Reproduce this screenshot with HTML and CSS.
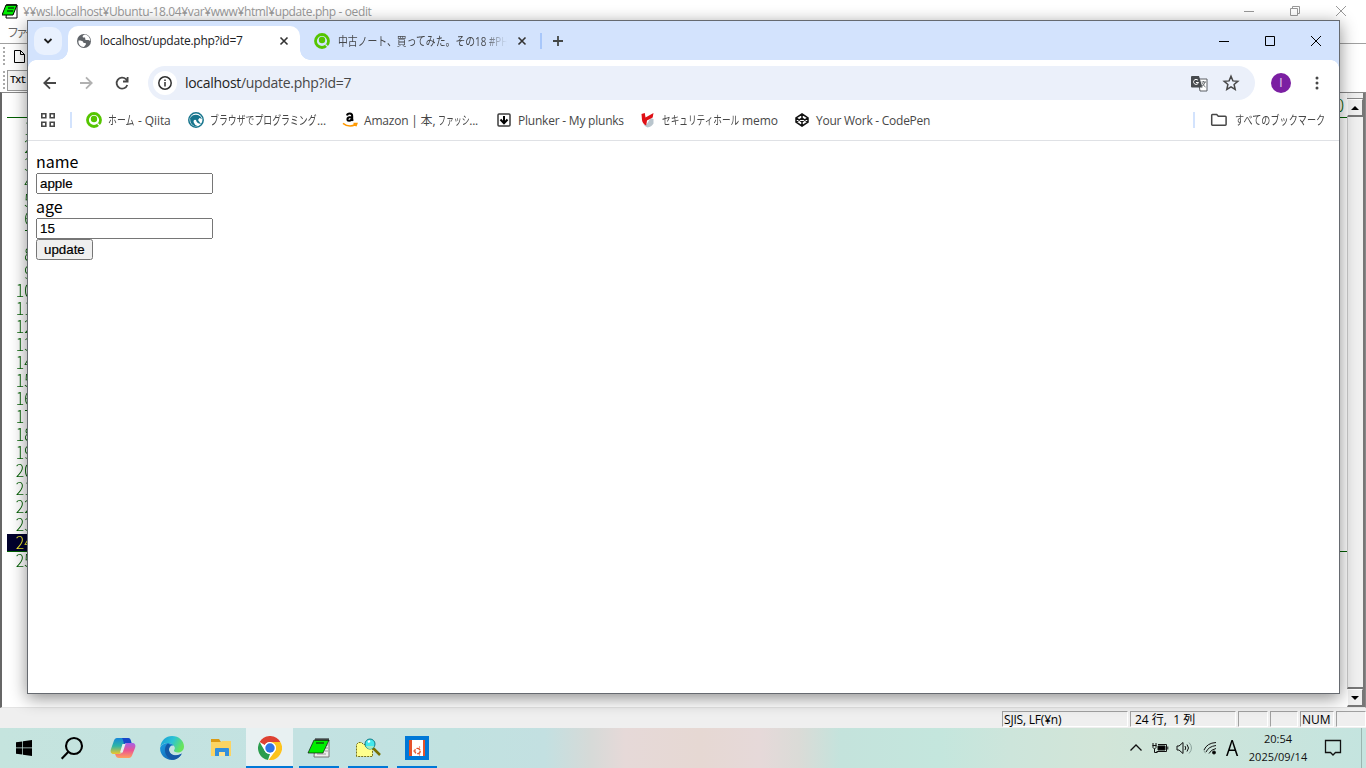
FILE: index.html
```
<!DOCTYPE html>
<html lang="ja">
	<head>
		<meta charset="utf-8"/>
		<title>localhost/update.php?id=7</title>
		<link rel="stylesheet" href="styles.css">
	</head>
	<body>
		<div class="editor">
			<div class="editor-title">
				<svg width="16" height="16" viewBox="0 0 16 16"><path d="M5 2h10v13H4z" fill="#fff" stroke="#000"/><path d="M4 2h11l-4 10H0z" fill="#0e0" stroke="#000"/><path d="M5 1v2M7 1v2M9 1v2M11 1v2M13 1v2M6 5h6M5 8h6" stroke="#000"/></svg>
				<span class="editor-name">¥¥wsl.localhost¥Ubuntu-18.04¥var¥www¥html¥update.php - oedit</span>
				<div class="editor-controls">
					<svg width="12" height="12" viewBox="0 0 12 12"><path d="M1 6.500h10"/></svg>
					<svg width="12" height="12" viewBox="0 0 12 12"><path d="M1.500 3.500h7v7h-7zM3.500 3V1.500h7v7H9"/></svg>
					<svg width="12" height="12" viewBox="0 0 12 12"><path d="M1 1l10 10M11 1L1 11"/></svg>
				</div>
			</div>
			<div class="editor-menu">ファイル(F)</div>
			<div class="editor-bar">
				<i class="grip"></i>
				<svg width="13" height="15" viewBox="0 0 13 15"><path d="M1.500 1.500h6l4 4v8h-10zM7.500 1.500v4h4" fill="#fff" stroke="#000"/></svg>
			</div>
			<div class="editor-bar">
				<i class="grip"></i>
				<span class="txt-button">Txt</span>
			</div>
			<div class="editor-main">
				<div class="code">
					<div class="ruler"><span>0</span></div>
					<div class="line"><span>&nbsp;1</span></div>
					<div class="line"><span>&nbsp;2</span></div>
					<div class="line"><span>&nbsp;3</span></div>
					<div class="line"><span>&nbsp;4</span></div>
					<div class="line"><span>&nbsp;5</span></div>
					<div class="line"><span>&nbsp;6</span></div>
					<div class="line"><span>&nbsp;7</span></div>
					<div class="line"><span>&nbsp;8</span></div>
					<div class="line"><span>&nbsp;9</span></div>
					<div class="line"><span>10</span></div>
					<div class="line"><span>11</span></div>
					<div class="line"><span>12</span></div>
					<div class="line"><span>13</span></div>
					<div class="line"><span>14</span></div>
					<div class="line"><span>15</span></div>
					<div class="line"><span>16</span></div>
					<div class="line"><span>17</span></div>
					<div class="line"><span>18</span></div>
					<div class="line"><span>19</span></div>
					<div class="line"><span>20</span></div>
					<div class="line"><span>21</span></div>
					<div class="line"><span>22</span></div>
					<div class="line"><span>23</span></div>
					<div class="line current"><span>24</span></div>
					<div class="line"><span>25</span></div>
				</div>
				<div class="scrollbar">
					<i class="splitter"></i>
					<i class="arrow up"></i>
					<i class="track"></i>
					<i class="arrow down"></i>
				</div>
			</div>
			<div class="editor-status">
				<span class="cell encoding">SJIS, LF(¥n)</span>
				<span class="cell position">24 行,&nbsp; 1 列</span>
				<span class="cell small"></span>
				<span class="cell small"></span>
				<span class="cell num">NUM</span>
				<span class="cell last"></span>
			</div>
		</div>

		<div class="taskbar">
			<div class="apps">
				<div class="app start"><svg width="16" height="16" viewBox="0 0 16 16"><path d="M0 2.300l6.300-.9v6.100H0zM7 1.300L16 0v7.500H7zM0 8.300h6.300v6.200L0 13.700zM7 8.300h9V16l-9-1.300z"/></svg></div>
				<div class="app search"><svg width="24" height="24" viewBox="0 0 24 24" fill="none" stroke="#000" stroke-width="2.100"><circle cx="14" cy="10" r="8"/><path d="M8.400 15.800L1.700 22.700"/></svg></div>
				<div class="app"><svg width="26" height="24" viewBox="0 0 26 24">
					<defs>
						<linearGradient id="cpa" x1="0" y1="0" x2="0" y2="1"><stop offset="0" stop-color="#1686d9"/><stop offset=".5" stop-color="#2db5a5"/><stop offset="1" stop-color="#f1c52c"/></linearGradient>
						<linearGradient id="cpb" x1="0" y1="0" x2="0" y2="1"><stop offset="0" stop-color="#a561e8"/><stop offset=".5" stop-color="#eb5592"/><stop offset="1" stop-color="#ffa15e"/></linearGradient>
					</defs>
					<path d="M7 2h10c2 0 3 1 3.500 3L21 7h-4c-2 0-3 1-3.500 3l-2 6c-.5 1-1 2-3 2H4c-3 0-4-2-3-5L4 4.500C4.600 3 5.500 2 7 2z" fill="url(#cpa)"/>
					<path d="M13 2h5c2 0 2.500 1 3 3l.6 2H17c-2 0-2.500.5-3 2-.3-3-.7-5-2-7z" fill="#1747c9"/>
					<path d="M19 22H9c-2 0-3-1-3.500-3L5 18h4c2 0 3-1 3.500-3l2-6c.5-1.500 1.500-2 3-2H22c3 0 4 2 3 5l-3 7.500c-.6 1.500-1.500 2.500-3 2.500z" fill="url(#cpb)"/>
					<path d="M12.500 8h3l-2.800 8.500H10z" fill="#e3f2ef"/>
				</svg></div>
				<div class="app"><svg width="24" height="24" viewBox="0 0 24 24">
					<defs>
						<linearGradient id="eda" x1="0" y1="0" x2="1" y2=".4"><stop offset="0" stop-color="#169bd7"/><stop offset=".55" stop-color="#2cc3d4"/><stop offset="1" stop-color="#67e45c"/></linearGradient>
						<linearGradient id="edb" x1="0" y1="0" x2="1" y2="1"><stop offset="0" stop-color="#1b9de2"/><stop offset="1" stop-color="#1256a5"/></linearGradient>
					</defs>
					<path d="M.3 11C1 4.500 6 0 12 0c7 0 12 5 12 10.500 0 3.500-2.500 6-6 6-3 0-4.500-1.300-4-2.300 1-1.200 1-2 .6-3.200C13.500 8.500 11 7 8 7c-4 0-6.700 2-7.700 4z" fill="url(#eda)"/>
					<path d="M.2 11.500C1.500 8.500 4.500 7 8 7c2.500 0 4.700 1 5.900 2.600-2.600-.9-5 1.200-4.900 4.400.1 4 4.500 6.500 9 5.200 1.600-.4 2.700-1 3.800-1.600C19.700 21.500 16 24 12 24 5 24-.6 18 .2 11.500z" fill="url(#edb)"/>
					<path d="M8 7.500c-3.500 2.500-4 8-1.500 12 1.500 2.400 4 3.900 7 4.300 3.500-.5 6.800-2.900 8.300-6.200-5.300 3.300-12 1.500-12.800-3.600-.3-2 .6-3.800 2-4.500z" fill="#1459a6"/>
				</svg></div>
				<div class="app"><svg width="22" height="20" viewBox="0 0 22 20"><path d="M1 1h8l2 3H1z" fill="#dc9a13"/><path d="M1 4h10l1-1h9v15H1z" fill="#fcd462"/><path d="M5 18v-7q0-1 1-1h12q1 0 1 1v7h-4v-4H9v4z" fill="#338fdc"/><path d="M9 14h6v4H9z" fill="#fbe191"/></svg></div>
				<div class="app active"><svg width="24" height="24" viewBox="0 0 24 24"><circle cx="12" cy="12" r="12" fill="#fff"/><path d="M1.600 6A12 12 0 0 1 22.400 6H12a6 6 0 0 0-5.200 3z" fill="#dd4233"/><path d="M1.600 6l5.200 9A6 6 0 0 0 12 18l-2 5.900A12 12 0 0 1 1.600 6z" fill="#2b9d4e"/><path d="M22.400 6A12 12 0 0 1 10.500 23.900L17.200 15A6 6 0 0 0 17 8.700L12 6z" fill="#fcc31e"/><circle cx="12" cy="12" r="6" fill="#fff"/><circle cx="12" cy="12" r="4.700" fill="#2e74e6"/></svg></div>
				<div class="app open"><svg width="24" height="22" viewBox="0 0 24 22"><path d="M8 3h14v17H7z" fill="#eee" stroke="#777"/><path d="M10 17h9M18 8h3M18 11h3M18 14h3" stroke="#999"/><path d="M7 3h15l-6 13H1z" fill="#0e0" stroke="#111" stroke-width=".7"/><path d="M9 1v3M11 1v3M13 1v3M15 1v3M17 1v3M19 1v3M21 1v3M9 6h8" stroke="#111"/></svg></div>
				<div class="app open"><svg width="26" height="20" viewBox="0 0 26 20"><path d="M1.500 18.500v-12l2-2h3l2 2h9v12z" fill="#ffff8c"/><path d="M1.500 18.500v-12l2-2h3l2 2h9v12z" fill="none" stroke="#77701b" stroke-dasharray="2 1"/><path d="M18 10l7 7" stroke="#777000" stroke-width="2.500"/><circle cx="15" cy="6" r="5" fill="#42e8ec" stroke="#117d88"/><path d="M11 8h8q-1 3-4 3t-4-3z" fill="#a2eac5"/><path d="M13 4l2-1" stroke="#fff" stroke-width="2"/></svg></div>
				<div class="app open"><svg width="24" height="24" viewBox="0 0 24 24"><path d="M0 0h24v24H0z" fill="#0078d7"/><path d="M4 4h16v16H4z" fill="#fff"/><path d="M4 4h3v16H4zM18 4h2v16h-2z" fill="#e5522b"/><circle cx="12.500" cy="15" r="2.700" fill="none" stroke="#e5522b" stroke-width="1.300" stroke-dasharray="4.500 1.150"/><path d="M8.500 15h1M14.300 11.500l.5-.8M14.300 18.500l.5.800" stroke="#e5522b" stroke-width="1.300"/></svg></div>
			</div>
			<div class="tray">
				<svg width="14" height="14" viewBox="0 0 14 14"><path d="M1.500 9.500L7 4l5.500 5.500" stroke-width="1.300"/></svg>
				<svg class="battery" width="17" height="12" viewBox="0 0 17 12"><path d="M1 1v3M4 1v3M.5 3.500h4M1 4v1.500l1.500 1.500L4 5.500V4M2.500 7v3.500h3M6 2.500h8.500v7H4.500M15.800 4.500v3"/><path d="M6 4h7v4H6z" fill="#000"/></svg>
				<svg class="volume" width="17" height="14" viewBox="0 0 17 14"><path d="M1 5h2l4-3.500v11L3 9H1zM9 5q1.500 2 0 4M11 3.500q3 3.500 0 7"/><path d="M13 1.500q5 5.500 0 11" stroke="#8ba29c"/></svg>
				<svg class="wifi" width="14" height="14" viewBox="0 0 14 14"><path d="M1 9Q4 2 13 1.500M3 11Q5.500 5.500 13 4.500M6 12.500Q8 8.500 13 7.500"/><circle cx="11" cy="11.500" r="1.500" fill="#000"/><path d="M1 9q0 3 2 3" stroke="#93a8a1"/></svg>
				<span class="ime">A</span>
				<div class="clock"><span>20:54</span><span>2025/09/14</span></div>
				<svg class="notice" width="18" height="18" viewBox="0 0 18 18"><path d="M1.500 1.500h15v12h-5L9 16l-2.500-2.500h-5z" stroke-width="1.300"/></svg>
				<i class="show-desktop"></i>
			</div>
		</div>

		<div class="browser">
			<div class="tabstrip">
				<div class="tab-search"><svg width="10" height="10" viewBox="0 0 10 10"><path d="M1.500 3L5 6.500 8.500 3"/></svg></div>
				<div class="tab selected">
					<svg class="favicon" width="16" height="16" viewBox="0 0 16 16"><circle cx="8" cy="8" r="7" fill="#5f6368"/><path d="M2.500 7.500C5 7.500 7.500 8 7.500 10H9.500q1 1 0 2T8 14C4 14 2 11 2.500 7.500zM9 1.600C7 2 6 3.500 7 4.500h2l.5 2.500h3L14.300 8C14 4.500 12 2 9 1.600z" fill="#fff"/></svg>
					<span class="tab-title local">localhost/update.php?id=7</span>
					<svg class="close" width="10" height="10" viewBox="0 0 10 10"><path d="M1.500 1.500l7 7M8.500 1.500l-7 7"/></svg>
				</div>
				<div class="tab">
					<svg class="favicon" width="16" height="16" viewBox="0 0 16 16"><circle cx="8" cy="8" r="6.500" fill="none" stroke="#55c500" stroke-width="2.800"/><circle cx="8" cy="7" r="3.200" fill="#55c500"/><path d="M11.500 11.500L15 15" stroke="#d3e3fd" stroke-width="1.300"/></svg>
					<span class="tab-title qiita"><b>中古ノート、買ってみた。その18 #PH</b></span>
					<svg class="close" width="10" height="10" viewBox="0 0 10 10"><path d="M1.500 1.500l7 7M8.500 1.500l-7 7"/></svg>
				</div>
				<i class="tab-divider"></i>
				<svg class="new-tab" width="12" height="12" viewBox="0 0 12 12"><path d="M6 1v10M1 6h10"/></svg>
				<div class="window-controls">
					<svg width="12" height="12" viewBox="0 0 12 12"><path d="M1 6.500h10"/></svg>
					<svg width="12" height="12" viewBox="0 0 12 12"><path d="M1.500 1.500h9v9h-9z"/></svg>
					<svg width="12" height="12" viewBox="0 0 12 12"><path d="M1 1l10 10M11 1L1 11"/></svg>
				</div>
			</div>
			<div class="toolbar">
				<svg class="nav" width="16" height="16" viewBox="0 0 16 16"><path d="M14 8H2.500M8 2.300L2.300 8 8 13.700"/></svg>
				<svg class="nav off" width="16" height="16" viewBox="0 0 16 16"><path d="M2 8h11.500M8 2.300L13.700 8 8 13.700"/></svg>
				<svg class="nav" width="16" height="16" viewBox="0 0 16 16"><path d="M13.300 10A5.500 5.500 0 1 1 12 4.200L13.500 6M13.600 2v4.500H9"/></svg>
				<div class="omnibox">
					<div class="info"><svg width="16" height="16" viewBox="0 0 16 16"><circle cx="8" cy="8" r="6.200"/><path d="M8 7v4.500M8 4.500V6"/></svg></div>
					<span class="url"><b>localhost</b>/update.php?id=7</span>
					<svg class="translate" width="17" height="17" viewBox="0 0 17 17"><path d="M7 4h9v12H9z" fill="#fff" stroke="#5a5f64"/><path d="M1 1h7l3.500 11.500H1q-1 0-1-1V2q0-1 1-1z" fill="#474b4f"/><path d="M10.500 7H15M12.500 6v1M14 7q-.5 3-4 5M11.500 8q1 3 3 4" fill="none" stroke="#6a6e71"/><path d="M7 5.300A2.500 2.500 0 1 0 7.500 7.500H5" fill="none" stroke="#fff"/></svg>
					<svg class="star" width="18" height="18" viewBox="0 0 18 18"><path d="M9 2.300l1.900 4.600 4.900.4-3.700 3.200 1.100 4.900L9 12.800l-4.200 2.600 1.100-4.900-3.700-3.200 4.900-.4z"/></svg>
				</div>
				<div class="avatar">I</div>
				<svg class="more" width="4" height="16" viewBox="0 0 4 16"><circle cx="2" cy="3" r="1.500"/><circle cx="2" cy="8" r="1.500"/><circle cx="2" cy="13" r="1.500"/></svg>
			</div>
			<div class="bookmarks">
				<svg class="grid" width="16" height="16" viewBox="0 0 16 16"><path d="M1.800 1.800h4v4h-4zM10.200 1.800h4v4h-4zM1.800 10.200h4v4h-4zM10.200 10.200h4v4h-4z"/></svg>
				<i class="divider"></i>
				<div class="bookmark b1">
					<svg width="16" height="16" viewBox="0 0 16 16"><circle cx="8" cy="8" r="6.500" fill="none" stroke="#55c500" stroke-width="2.800"/><circle cx="8" cy="7" r="3.200" fill="#55c500"/><path d="M11.500 11.500L15 15" stroke="#fff" stroke-width="1.300"/></svg>
					<span><b class="kana">ホーム</b> - Qiita</span>
				</div>
				<div class="bookmark b2">
					<svg width="16" height="16" viewBox="0 0 16 16"><circle cx="8" cy="8" r="7.200" fill="#fff" stroke="#17758d" stroke-width="1.500"/><path d="M2 6q3-4.500 8-3 3 1 4 4l-2.500-1-1.500 2 3 4q-4.500-.5-5-4Q5.500 7 5.500 10q1 3 4 4-5 1-7-4z" fill="#17758d"/></svg>
					<span><b class="kana">ブラウザでプログラミング</b>...</span>
				</div>
				<div class="bookmark b3">
					<svg width="16" height="16" viewBox="0 0 16 16"><path d="M5 3.500Q5.300 1.500 7.800 1.500q2.400 0 2.400 2.500v3.500l.8 1.200M9.500 5Q5.400 5 5.400 7.200q0 1.500 1.700 1.500 2.400 0 2.400-2.200" fill="none" stroke="#000" stroke-width="2"/><path d="M1 11.300q6 4.700 12.500 1.200M11.500 11.500h3.300l-1 2.800" fill="none" stroke="#f90" stroke-width="1.600"/></svg>
					<span>Amazon | 本, <b class="kana">ファッシ</b>...</span>
				</div>
				<div class="bookmark b4">
					<svg width="16" height="16" viewBox="0 0 16 16"><rect x="2" y="2" width="12" height="12" rx="1" fill="#fff" stroke="#3c3c3c" stroke-width="1.500"/><path d="M8 4v7M4.500 7.500L8 11.300l3.500-3.800" fill="none" stroke="#000" stroke-width="2"/></svg>
					<span>Plunker - My plunks</span>
				</div>
				<div class="bookmark b5">
					<svg width="16" height="16" viewBox="0 0 16 16"><path d="M10.500 6l3 1v4.500q-2 3.500-6 4-3-1-4-3.500l3 .5z" fill="#b9c5cd"/><path d="M1.500 2L4.800 1l.7 4.500L13.500 1l-.8 4.500L7 8.500l-.8 5Q2.500 11.500 2 8z" fill="#df1016"/></svg>
					<span><b class="kana">セキュリティホール</b> memo</span>
				</div>
				<div class="bookmark b6">
					<svg width="16" height="16" viewBox="0 0 16 16" fill="none" stroke="#111" stroke-width="1.500"><path d="M8 2l6 3.800v4.400L8 14l-6-3.800V5.800zM8 2v4M8 10v4M2 5.800l6 4 6-4M2 10.200l6-4 6 4"/></svg>
					<span>Your Work - CodePen</span>
				</div>
				<div class="all-bookmarks">
					<i class="divider"></i>
					<svg width="18" height="16" viewBox="0 0 18 16"><path d="M1.700 12.500V3.200q0-.7.700-.7h4.300l1.600 1.700h7q.8 0 .8.800v7.500q0 .7-.8.700H2.400q-.7 0-.7-.7z"/></svg>
					<span class="all-label">すべてのブックマーク</span>
				</div>
			</div>
			<div class="page">
				<form>
					name<br>
					<input type="text" name="name" value="apple">
					age<br>
					<input type="text" name="age" value="15">
					<button type="button">update</button>
				</form>
			</div>
		</div>
	</body>
</html>
```

FILE: styles.css
```
* {
	box-sizing: border-box;
}
html, body {
	height: 100%;
}
body {
	margin: 0;
	overflow: hidden;
	position: relative;
	font-family: "Open Sans", "Noto Sans CJK JP", sans-serif;
	font-size: 12px;
	display: flex;
	flex-direction: column;
}
svg {
	display: block;
	flex: none;
}
i {
	display: block;
	flex: none;
}
b {
	font-weight: normal;
}
span {
	white-space: nowrap;
}

/* editor behind the browser */
.editor {
	height: 728px;
	display: flex;
	flex-direction: column;
	background: #fff;
}
.editor-title {
	height: 22px;
	display: flex;
	align-items: center;
	padding-left: 2px;
	color: #999;
}
.editor-name {
	margin-left: 5px;
	letter-spacing: -0.38px;
}
.editor-controls {
	display: flex;
	gap: 34px;
	margin-left: auto;
	padding-right: 19px;
	fill: none;
	stroke: #999;
}
.editor-menu {
	height: 22px;
	padding-left: 7px;
	line-height: 21px;
	color: #666;
	border-bottom: 1px solid #a0a0a0;
	letter-spacing: -3px;
}
.editor-bar {
	height: 24px;
	display: flex;
	align-items: center;
	padding-left: 3px;
	gap: 2px;
}
.editor-bar svg {
	margin-left: 6px;
}
.grip {
	width: 2px;
	height: 18px;
	background: repeating-linear-gradient(#aaa 0 2px, #fff 2px 4px);
}
.txt-button {
	width: 40px;
	height: 21px;
	padding-left: 2px;
	line-height: 20px;
	border: 1px solid #999;
	background: #f5f5f5;
	font-family: "Liberation Mono", monospace;
	font-size: 10px;
	letter-spacing: -0.8px;
	-webkit-text-stroke: .2px #000;
}
.editor-main {
	height: 616px;
	display: flex;
	border: 1px solid #888;
	border-left: 2px solid #666;
	border-bottom-color: #e3e3e3;
	padding: 3px 0 0 5px;
}
.code {
	flex: 1;
	color: #005f00;
	font: 300 17px "Noto Sans CJK JP", sans-serif;
}
.ruler {
	height: 22px;
	border-bottom: 1px solid #005f00;
	text-align: right;
	margin-bottom: 2px;
	padding-right: 3px;
	line-height: 17px;
}
.line {
	height: 18px;
	line-height: 15px;
	padding-left: 8px;
	white-space: nowrap;
}
.line span {
	display: inline-block;
	width: 19px;
	text-align: right;
	transform: scaleX(.93);
	transform-origin: left;
}
.line.current {
	background: linear-gradient(90deg, #00002d 25px, transparent 25px);
	border-bottom: 1px solid #005f00;
	color: #f4ee30;
}
.scrollbar {
	width: 18px;
	display: flex;
	flex-direction: column;
	background: #f0f0f0;
	border-right: 2px solid #777;
	margin-top: -3px;
}
.splitter {
	height: 6px;
	border-bottom: 1px solid #888;
}
.arrow {
	height: 18px;
	border: 1px solid #fff;
	border-right-color: #777;
	border-bottom: 2px solid #777;
	display: flex;
	align-items: center;
	justify-content: center;
}
.arrow::after {
	content: "";
	border: 4px solid transparent;
}
.arrow.up::after {
	border-top: 0;
	border-bottom-color: #000;
}
.arrow.down::after {
	border-bottom: 0;
	border-top-color: #000;
}
.track {
	flex: 1;
	border-left: 1px solid #ccc;
	border-bottom: 2px solid #777;
}
.editor-status {
	height: 20px;
	display: flex;
	justify-content: flex-end;
	gap: 2px;
	padding-top: 3px;
	background: #efefef;
}
.cell {
	height: 16px;
	line-height: 16px;
	padding-left: 1px;
	border: 1px solid #a0a0a0;
	border-right-color: #fff;
	border-bottom-color: #fff;
}
.cell.encoding {
	width: 126px;
	letter-spacing: -0.2px;
}
.cell.position {
	width: 106px;
	padding-left: 4px;
}
.cell.small {
	width: 30px;
}
.cell.small + .small {
	width: 28px;
}
.cell.num {
	width: 34px;
}
.cell.last {
	width: 30px;
}

/* taskbar */
.taskbar {
	height: 40px;
	display: flex;
	justify-content: space-between;
	background: linear-gradient(90deg, #c5e4de 0, #c3e2e2 300px, #c1e2e0 450px, #c3e0e1 545px, #d6dad8 590px, #e6d9d8 625px, #e6d8d3 700px, #e6d9d9 760px, #dadbd7 800px, #c4e3dc 840px, #c4e6dd 940px, #cde5db 1010px, #d2e5d8 1100px, #c4e4df 1366px);
}
.apps {
	display: flex;
}
.app {
	width: 49px;
	height: 40px;
	display: flex;
	align-items: center;
	justify-content: center;
	border: solid transparent;
	border-width: 0 1px;
	position: relative;
}
.app.start {
	padding-right: 2px;
}
.app.search {
	padding-right: 4px;
}
.app.active {
	background: #e8f1f2;
	background-clip: padding-box;
}
.app.active::after, .app.open::after {
	content: "";
	position: absolute;
	left: 4px;
	right: 3px;
	bottom: 0;
	height: 2px;
	background: #0078d7;
}
.app.active::after {
	left: 0;
	right: 0;
}
.tray {
	display: flex;
	align-items: center;
	fill: none;
	stroke: #111;
}
.battery {
	margin-left: 9px;
}
.volume {
	margin-left: 7px;
}
.wifi {
	margin-left: 10px;
}
.ime {
	margin-left: 9px;
	width: 12px;
	font-size: 21px;
	line-height: 40px;
	transform: scaleX(.92);
	transform-origin: left;
}
.clock {
	width: 60px;
	margin-left: 10px;
	display: flex;
	flex-direction: column;
	align-items: center;
	line-height: 18px;
	font-size: 11px;
	color: #111;
}
.notice {
	margin-left: 16px;
}
.show-desktop {
	width: 5px;
	height: 40px;
	margin-left: 19px;
	border-left: 1px solid #9bb5b0;
}

/* browser window */
.browser {
	position: absolute;
	left: 27px;
	top: 20px;
	width: 1313px;
	height: 674px;
	border: 1px solid #666a70;
	background: #fff;
	display: flex;
	flex-direction: column;
	box-shadow: 0 4px 16px rgba(0, 0, 0, .45);
	color: #474747;
}
.tabstrip {
	height: 39px;
	display: flex;
	align-items: center;
	padding-left: 6px;
	background: #d3e3fd;
	color: #45474a;
}
.tab-search {
	width: 28px;
	height: 28px;
	border-radius: 10px;
	background: #e9f1fe;
	display: flex;
	align-items: center;
	justify-content: center;
	fill: none;
	stroke: #1f1f1f;
	stroke-width: 1.8;
}
.tab {
	display: flex;
	align-items: center;
	height: 34px;
	padding-left: 14px;
	padding-bottom: 5px;
	margin-top: 5px;
}
.tab.selected {
	width: 232px;
	margin-left: 6px;
	padding-left: 8px;
	background: #fff;
	border-radius: 10px 10px 0 0;
	position: relative;
	color: #202124;
}
.tab.selected::before, .tab.selected::after {
	content: "";
	position: absolute;
	bottom: 0;
	width: 10px;
	height: 10px;
}
.tab.selected::before {
	left: -10px;
	background: radial-gradient(circle at 0 0, transparent 9.5px, #fff 10px);
}
.tab.selected::after {
	right: -10px;
	background: radial-gradient(circle at 100% 0, transparent 9.5px, #fff 10px);
}
.tab-title {
	margin-left: 8px;
}
.tab-title.local {
	width: 171px;
	letter-spacing: -0.25px;
}
.tab-title.qiita {
	width: 170px;
	-webkit-mask-image: linear-gradient(90deg, #000 145px, transparent 169px);
}
.tab-title b {
	display: inline-block;
	transform: scaleX(.82);
	transform-origin: left;
}
.close {
	margin-left: 8px;
	fill: none;
	stroke: #333;
	stroke-width: 1.6;
}
.tab:not(.selected) .close {
	margin-left: 9px;
}
.tab-divider {
	width: 2px;
	height: 16px;
	margin-left: 13px;
	background: #a8c7fa;
}
.new-tab {
	margin-left: 10px;
	fill: none;
	stroke: #444746;
	stroke-width: 1.8;
}
.window-controls {
	display: flex;
	gap: 34px;
	margin-left: auto;
	padding-right: 17px;
	fill: none;
	stroke: #000;
}
.toolbar {
	height: 46px;
	display: flex;
	align-items: center;
	padding-left: 14px;
}
.toolbar::before {
	content: "";
	position: absolute;
	top: 39px;
	left: 0;
	right: 0;
	height: 8px;
	background: radial-gradient(circle at 8px 8px, transparent 7.5px, #d3e3fd 8px) left / 8px 8px no-repeat, radial-gradient(circle at 0 8px, transparent 7.5px, #d3e3fd 8px) right / 8px 8px no-repeat;
}
.nav {
	margin-right: 20px;
	fill: none;
	stroke: #474747;
	stroke-width: 1.8;
}
.nav.off {
	stroke: #b1b1b1;
}
.omnibox {
	width: 1107px;
	height: 34px;
	margin-left: -2px;
	padding-left: 5px;
	border-radius: 17px;
	background: #ebf0fa;
	display: flex;
	align-items: center;
}
.info {
	width: 24px;
	height: 24px;
	border-radius: 50%;
	background: #fff;
	display: flex;
	align-items: center;
	justify-content: center;
	fill: none;
	stroke: #303030;
	stroke-width: 1.5;
}
.url {
	margin-left: 8px;
	padding-bottom: 2px;
	font-size: 14px;
	letter-spacing: -0.3px;
}
.url b {
	color: #1f1f1f;
}
.translate {
	margin-left: auto;
}
.star {
	margin: 0 15px 0 14px;
	fill: none;
	stroke: #474747;
	stroke-width: 1.5;
}
.avatar {
	width: 20px;
	height: 20px;
	margin-left: 16px;
	border-radius: 50%;
	background: #7b1fa2;
	color: #ddc6e8;
	font: 12px/20px Roboto, sans-serif;
	text-align: center;
}
.more {
	margin-left: 24px;
	fill: #474747;
}
.bookmarks {
	height: 35px;
	padding: 0 15px 6px 12px;
	border-bottom: 1px solid #dfe1e5;
	display: flex;
	align-items: center;
}
.grid {
	fill: none;
	stroke: #474747;
	stroke-width: 1.6;
}
.divider {
	width: 2px;
	height: 16px;
	background: #d3e3fd;
}
.grid + .divider {
	margin: 0 14px;
}
.bookmark {
	display: flex;
	align-items: center;
	gap: 6px;
	flex: none;
	letter-spacing: -0.1px;
}
.kana {
	display: inline-block;
	letter-spacing: 0;
	transform: scaleX(.74);
	transform-origin: left;
}
.b1 {
	width: 102px;
}
.b1 .kana {
	width: 27px;
}
.b2 {
	width: 154px;
}
.b2 .kana {
	width: 107px;
}
.b3 {
	width: 154px;
	letter-spacing: -0.2px;
}
.b3 .kana {
	width: 31px;
	transform: scaleX(.66);
}
.b4 {
	width: 144px;
	letter-spacing: -0.22px;
}
.b5 {
	width: 154px;
}
.b5 .kana {
	width: 77px;
	transform: scaleX(.72);
}
.b6 {
	letter-spacing: -0.26px;
}
.all-bookmarks {
	display: flex;
	align-items: center;
	margin-left: auto;
	width: 131px;
	fill: none;
	stroke: #474747;
	stroke-width: 1.5;
}
.all-bookmarks svg {
	margin: 0 7px 0 15px;
}
.all-label {
	transform: scaleX(.76);
	transform-origin: left;
}

/* update form */
.page {
	flex: 1;
	padding: 8px;
	color: #000;
	font: 16px/24px "Noto Sans CJK JP", sans-serif;
}
.page form {
	margin: 0;
}
.page input, .page button {
	display: block;
	-webkit-text-stroke: .2px #000;
}
.page input {
	width: 177px;
}
```
